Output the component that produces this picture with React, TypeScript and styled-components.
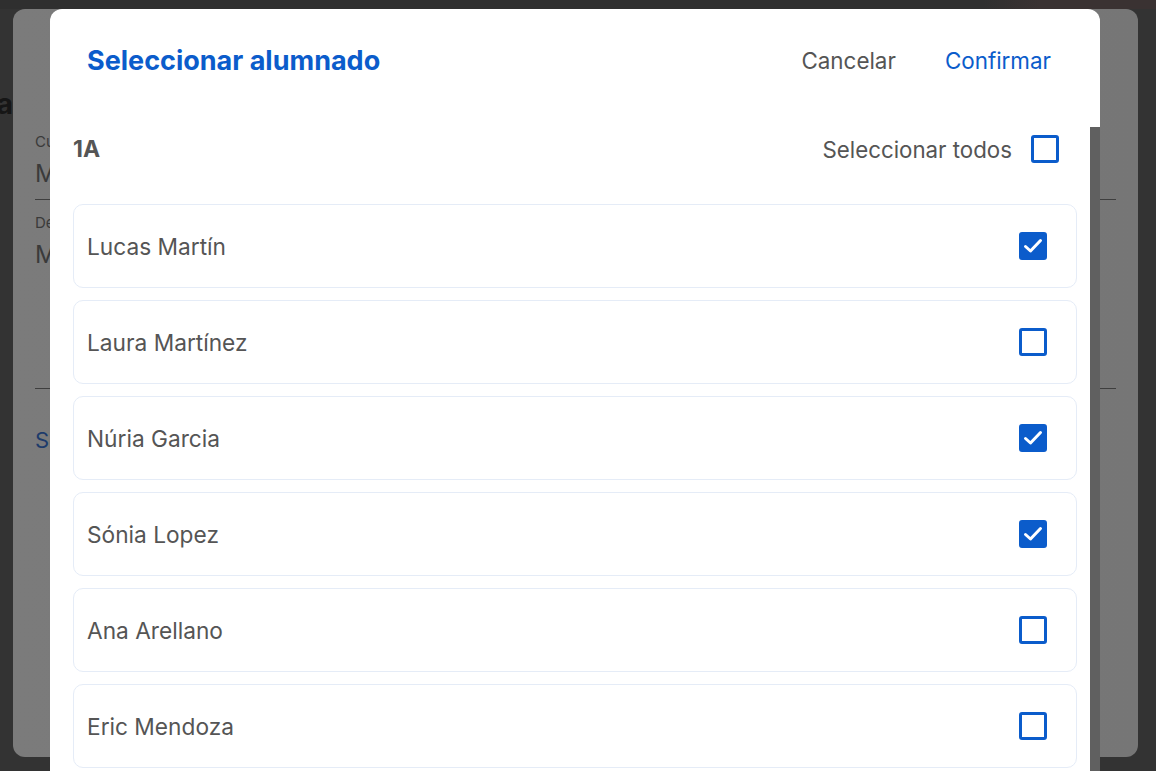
import React from "react";
import styled, { createGlobalStyle } from "styled-components";

const Global = createGlobalStyle`
  html, body { margin: 0; padding: 0; }
  body {
    width: 1156px;
    height: 771px;
    overflow: hidden;
    background: #333333;
    font-family: Inter, "Noto Sans", sans-serif;
  }
`;

const Page = styled.div`
  position: relative;
  width: 1156px;
  height: 771px;
  display: flex;
  flex-direction: column;
  background: #333333;
`;

const TopStrip = styled.div`
  height: 9px;
  flex-shrink: 0;
  background: linear-gradient(90deg, #2f2f2f 0%, #2f2f2f 85%, #3a3232 90%, #3a3232 100%);
`;

const PageBody = styled.div`
  display: flex;
  flex: 1;
`;

const Gutter = styled.div`
  width: 13px;
  flex-shrink: 0;
  overflow: hidden;
  display: flex;
  justify-content: flex-end;
  padding-top: 78px;
  font-size: 28px;
  font-weight: 700;
  color: #161616;
  white-space: nowrap;
`;

const BackCard = styled.div`
  width: 1125px;
  height: 748px;
  border-radius: 12px;
  background: linear-gradient(90deg, #7b7b7b 0%, #767676 100%);
  display: flex;
  flex-direction: column;
  padding: 124px 22px 0 22px;
  box-sizing: border-box;
`;

const Field = styled.div<{ $h: number }>`
  height: ${(p) => p.$h}px;
  flex-shrink: 0;
  border-bottom: 1px solid #3e3e3e;
  display: flex;
  flex-direction: column;
  margin-bottom: 14px;
`;

const FieldLabel = styled.div`
  font-size: 15px;
  color: #3a3a3a;
  line-height: 18px;
`;

const FieldValue = styled.div`
  font-size: 24px;
  color: #3a3a3a;
  line-height: 34px;
  margin-top: 6px;
`;

const LinkText = styled.div`
  margin-top: 24px;
  font-size: 22px;
  color: #1d3b6b;
`;

const Modal = styled.div`
  position: absolute;
  left: 50px;
  top: 9px;
  width: 1050px;
  height: 800px;
  border-radius: 12px 12px 0 0;
  overflow: hidden;
  background: #606060;
  display: flex;
  flex-direction: column;
`;

const Header = styled.div`
  height: 118px;
  background: #ffffff;
  display: flex;
  align-items: flex-start;
  justify-content: space-between;
  padding: 36px 49px 0 37px;
  box-sizing: border-box;
  flex-shrink: 0;
`;

const Title = styled.h2`
  margin: 0;
  font-size: 27px;
  font-weight: 700;
  line-height: 32px;
  color: #0b5ccb;
`;

const Actions = styled.div`
  display: flex;
  gap: 49px;
`;

const ActionButton = styled.button<{ $primary?: boolean }>`
  border: none;
  background: none;
  padding: 0;
  font-family: inherit;
  font-size: 22.4px;
  line-height: 32px;
  color: ${(p) => (p.$primary ? "#0b5ccb" : "#555555")};
  cursor: pointer;
`;

const Body = styled.div`
  width: 1040px;
  flex: 1;
  background: #ffffff;
  padding: 0 13px 0 23px;
  box-sizing: border-box;
  display: flex;
  flex-direction: column;
  overflow: hidden;
`;

const SectionHeader = styled.div`
  height: 44px;
  flex-shrink: 0;
  margin: 0 18px 33px 0;
  display: flex;
  align-items: center;
  justify-content: space-between;
`;

const SectionTitle = styled.div`
  font-size: 23px;
  font-weight: 700;
  color: #555555;
`;

const SelectAll = styled.label`
  display: flex;
  align-items: center;
  gap: 19px;
  font-size: 22.3px;
  color: #555555;
`;

const List = styled.div`
  display: flex;
  flex-direction: column;
  flex-shrink: 0;
  gap: 12px;
`;

const Row = styled.div`
  height: 84px;
  flex-shrink: 0;
  box-sizing: border-box;
  border: 1px solid #e5ecf7;
  border-radius: 10px;
  display: flex;
  align-items: center;
  justify-content: space-between;
  padding: 0 29px 0 13px;
`;

const Name = styled.span`
  font-size: 22.7px;
  color: #555555;
`;

const Box = styled.span<{ $checked?: boolean }>`
  width: 28px;
  height: 28px;
  flex-shrink: 0;
  box-sizing: border-box;
  border-radius: 3px;
  border: 3px solid #0b5ccb;
  background: ${(p) => (p.$checked ? "#0b5ccb" : "#ffffff")};
  display: flex;
  align-items: center;
  justify-content: center;
`;

const Check = ({ checked }: { checked?: boolean }) => (
  <Box $checked={checked}>
    {checked && (
      <svg width="22" height="22" viewBox="0 0 22 22">
        <path d="M3.5 11.5 L8.5 16 L18.5 5.5" fill="none" stroke="#ffffff" strokeWidth="3" strokeLinecap="round" strokeLinejoin="round" />
      </svg>
    )}
  </Box>
);

const students = [
  { name: "Lucas Martín", checked: true },
  { name: "Laura Martínez", checked: false },
  { name: "Núria Garcia", checked: true },
  { name: "Sónia Lopez", checked: true },
  { name: "Ana Arellano", checked: false },
  { name: "Eric Mendoza", checked: false },
  { name: "Pau Serra", checked: false },
];

export default function App() {
  return (
    <>
      <Global />
      <Page>
        <TopStrip />
        <PageBody>
          <Gutter>Asistencia</Gutter>
          <BackCard>
            <Field $h={66}>
              <FieldLabel>Curso</FieldLabel>
              <FieldValue>Matemáticas</FieldValue>
            </Field>
            <Field $h={174}>
              <FieldLabel>Descripción</FieldLabel>
              <FieldValue>Material</FieldValue>
            </Field>
            <LinkText>Seleccionar alumnado</LinkText>
          </BackCard>
        </PageBody>
        <Modal>
          <Header>
            <Title>Seleccionar alumnado</Title>
            <Actions>
              <ActionButton>Cancelar</ActionButton>
              <ActionButton $primary>Confirmar</ActionButton>
            </Actions>
          </Header>
          <Body>
            <SectionHeader>
              <SectionTitle>1A</SectionTitle>
              <SelectAll>
                Seleccionar todos
                <Check />
              </SelectAll>
            </SectionHeader>
            <List>
              {students.map((s) => (
                <Row key={s.name}>
                  <Name>{s.name}</Name>
                  <Check checked={s.checked} />
                </Row>
              ))}
            </List>
          </Body>
        </Modal>
      </Page>
    </>
  );
}
